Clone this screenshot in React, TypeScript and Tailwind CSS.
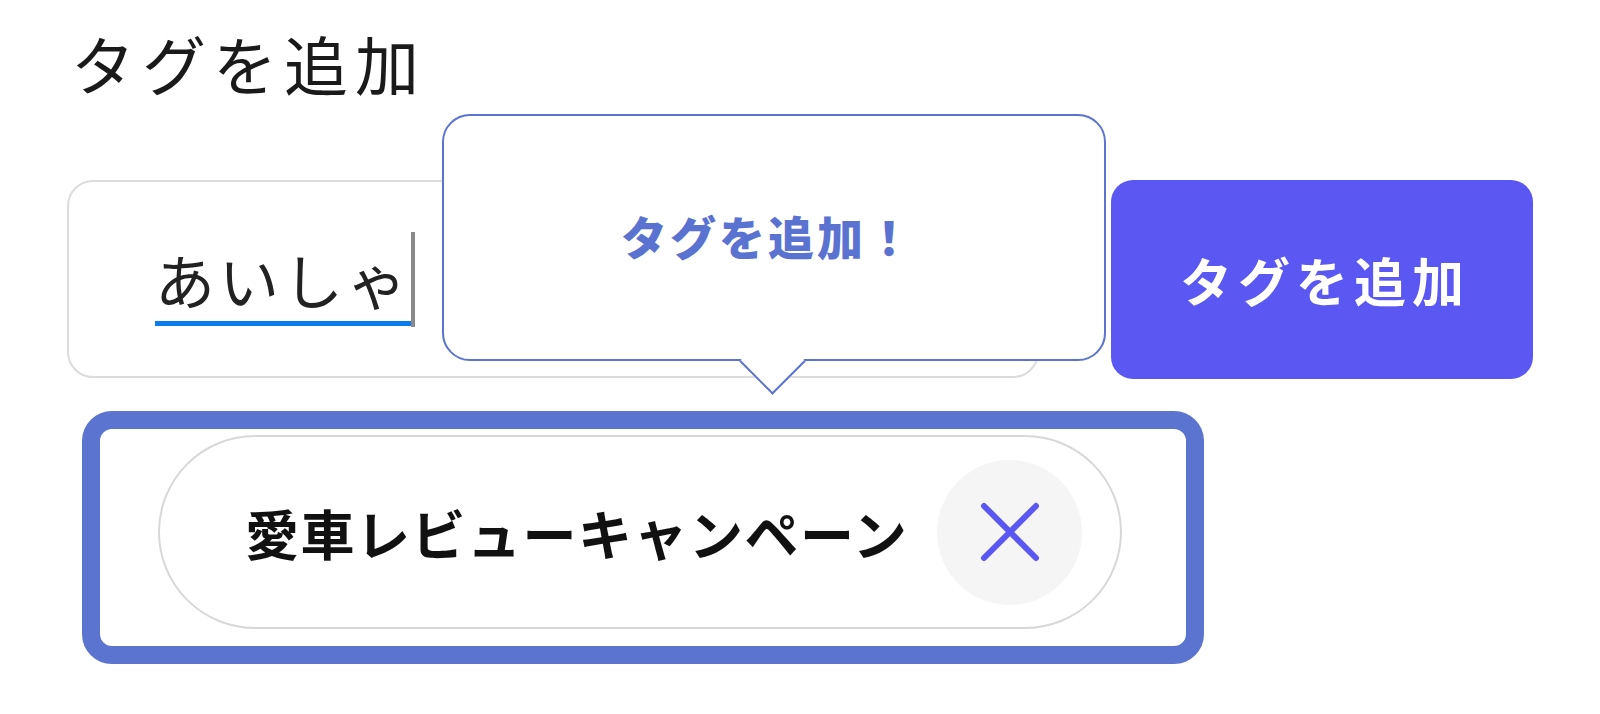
export default function App() {
  return (
    <div className="w-[1600px] h-[714px] bg-white font-['Noto_Sans_CJK_JP',sans-serif] text-[#111] pl-[67px] pt-[22px] overflow-hidden">
      {/* Heading */}
      <h2 className="text-[64px] leading-[80px] font-normal tracking-[7px] pl-[4px] text-[#1a1a1a]">タグを追加</h2>

      {/* Input row */}
      <div className="flex gap-[72px] mt-[78px]">
        <div className="relative w-[972px] h-[198px] rounded-[26px] border-2 border-[#dcdcdc] flex items-center pl-[86px]">
          <div className="flex items-end">
            <span className="text-[60px] leading-none pb-[12px] border-b-[5px] border-[#0b7bef] text-[#222] tracking-[4px]">あいしゃ</span>
            <span className="w-[4px] h-[95px] bg-[#8a8a8a] mb-[-1px]" />
          </div>

          {/* Tooltip bubble */}
          <div className="absolute left-[373px] top-[-68px] w-[664px] h-[247px] bg-white border-2 border-[#5b74cf] rounded-[28px] flex items-center justify-center">
            <span className="text-[46px] font-black text-[#5a72d0] tracking-[3px] mr-[12px] mb-[4px]">タグを追加！</span>
            <div className="absolute left-[305px] top-[222px] w-[47px] h-[47px] bg-white border-r-2 border-b-2 border-[#5b74cf] rotate-45" />
          </div>
        </div>

        <button className="w-[422px] h-[199px] rounded-[22px] bg-[#5b57f2] text-white text-[52px] font-bold tracking-[6px] pl-[6px] flex items-center justify-center">
          タグを追加
        </button>
      </div>

      {/* Selected tag */}
      <div className="mt-[32px] ml-[15px] w-[1122px] h-[253px] border-[18px] border-[#5a74cf] rounded-[30px] pl-[58px] pt-[6px]">
        <div className="w-[964px] h-[194px] rounded-full border-2 border-[#d8d8d8] flex items-center pl-[85px] pr-[38px]">
          <span className="text-[54px] font-bold tracking-[1.5px] text-[#111]">愛車レビューキャンペーン</span>
          <span className="ml-auto w-[145px] h-[145px] rounded-full bg-[#f5f5f5] flex items-center justify-center">
            <svg width="60" height="60" viewBox="0 0 60 60" fill="none">
              <path d="M4 4L56 56M56 4L4 56" stroke="#5b57f2" strokeWidth="6" strokeLinecap="round" />
            </svg>
          </span>
        </div>
      </div>
    </div>
  );
}
